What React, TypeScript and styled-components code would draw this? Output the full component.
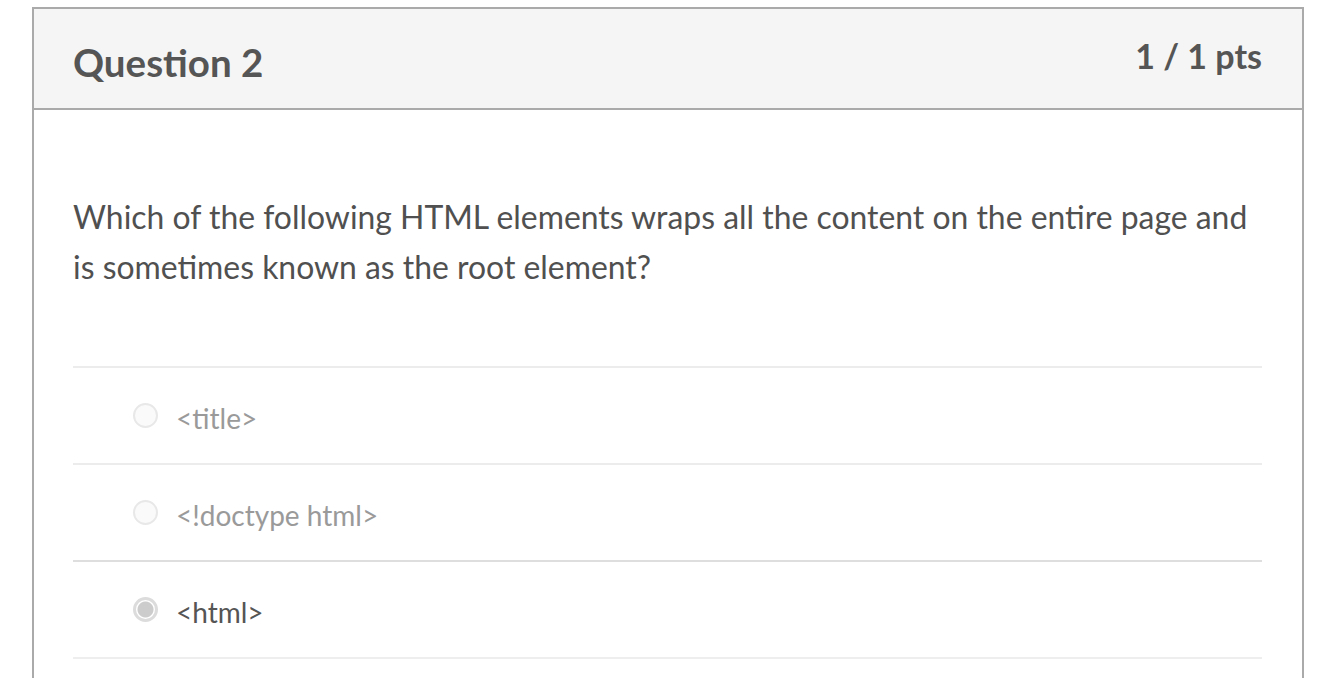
import React from "react"
import styled, { createGlobalStyle } from "styled-components"

const GlobalStyle = createGlobalStyle`
    html, body {
        margin: 0;
        padding: 0;
        background: #fff;
        font-family: Lato, "Open Sans", sans-serif;
    }
`

const Card = styled.div`
    margin: 7px 34px 0 32px;
    border: 2px solid #aaa;
    border-bottom: none;
    height: 700px;
`

const Header = styled.div`
    display: flex;
    justify-content: space-between;
    align-items: flex-start;
    background-color: #f5f5f5;
    border-bottom: 2px solid #aaa;
    height: 101px;
    padding: 0 40px 0 39px;
    box-sizing: border-box;
`

const Title = styled.h2`
    margin: 30px 0 0;
    font-size: 38.5px;
    font-weight: 700;
    line-height: 1.2;
    color: #555;
`

const Points = styled.div`
    margin-top: 27px;
    font-size: 34px;
    font-weight: 700;
    line-height: 1.2;
    color: #555;
`

const Body = styled.div`
    padding: 82px 40px 0 39px;
`

const QuestionText = styled.p`
    margin: 0 0 74px;
    font-size: 31.9px;
    line-height: 50px;
    color: #505050;
`

const AnswerList = styled.ul`
    list-style: none;
    margin: 0;
    padding: 0;
    border-bottom: 2px solid #eee;
`

const Answer = styled.li<{ $selected?: boolean }>`
    display: flex;
    align-items: center;
    gap: 18px;
    height: 95px;
    padding-left: 60px;
    border-top: 2px solid ${p => (p.$selected ? "#dedede" : "#ececec")};
    font-size: 28px;
    color: ${p => (p.$selected ? "#555" : "#9a9a9a")};
`

const Label = styled.span`
    position: relative;
    top: 2px;
`

const Radio = styled.span<{ $checked?: boolean }>`
    box-sizing: border-box;
    width: 25px;
    height: 25px;
    border-radius: 50%;
    border: ${p => (p.$checked ? "3px solid #dcdcdc" : "2px solid #e8e8e8")};
    background: ${p => (p.$checked ? "radial-gradient(circle, #cccccc 0 7.5px, #fff 8.5px)" : "#fafafa")};
    flex-shrink: 0;
`

const answers = [
    { label: "<title>", selected: false },
    { label: "<!doctype html>", selected: false },
    { label: "<html>", selected: true },
]

const App = () => {
    return (
        <>
            <GlobalStyle />
            <Card>
                <Header>
                    <Title>Question 2</Title>
                    <Points>1 / 1 pts</Points>
                </Header>
                <Body>
                    <QuestionText>
                        Which of the following HTML elements wraps all the content on the entire page and
                        is sometimes known as the root element?
                    </QuestionText>
                    <AnswerList>
                        {answers.map(a => (
                            <Answer key={a.label} $selected={a.selected}>
                                <Radio $checked={a.selected} />
                                <Label>{a.label}</Label>
                            </Answer>
                        ))}
                    </AnswerList>
                </Body>
            </Card>
        </>
    )
}

export default App
